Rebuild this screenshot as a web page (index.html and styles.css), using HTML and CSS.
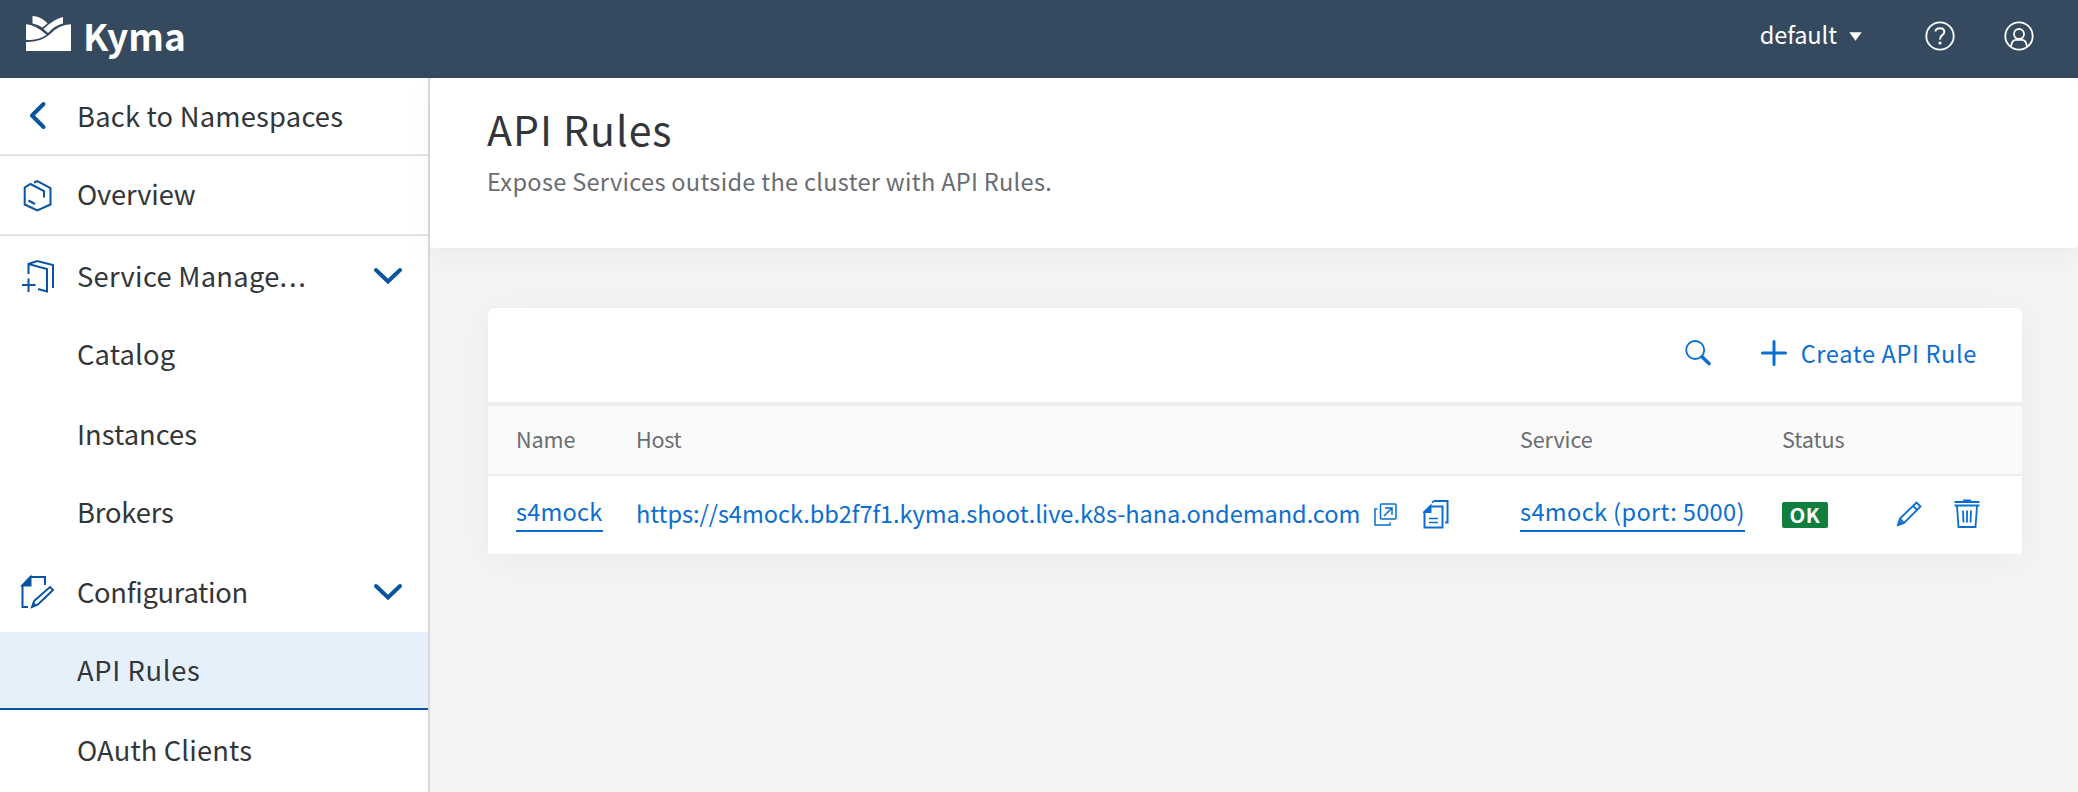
FILE: index.html
```
<!DOCTYPE html>
<html lang="en">
<head>
<meta charset="utf-8">
<title>Kyma</title>
<link rel="stylesheet" href="styles.css">
</head>
<body>
<header class="topbar">
  <div class="brand">
    <svg class="brand-mark" width="46" height="36" viewBox="0 0 46 36" fill="#fff">
      <path d="M6.500 0Q15 .3 21.500 7.300L16.500 11.500Q12 8.500 6.500 7.500Z"/>
      <path d="M37 1V7.500Q29 9 22 17L17.500 13Q28 3 37 1Z"/>
      <path d="M0 8.300Q9 8.500 20.500 18.800Q12 25 0 23.700Z"/>
      <path d="M45 8.300V35H0V26Q14 26.500 23 19Q33 8.500 45 8.300Z"/>
    </svg>
    <span class="brand-name">Kyma</span>
  </div>
  <div class="topbar-actions">
    <span class="namespace">default</span>
    <svg class="caret" width="13" height="9" viewBox="0 0 13 9"><path d="M.3.300h12.400L6.500 8.700z" fill="#fff"/></svg>
    <svg class="help" width="30" height="30" viewBox="0 0 30 30" fill="none" stroke="#fff" stroke-width="1.800"><circle cx="15" cy="15" r="13.700"/><path d="M10.500 10.500Q10.800 7.200 15 7.200Q19.300 7.200 19.300 10.800Q19.300 12.800 17.200 14.200Q15 15.600 15 18.500" stroke-width="2"/><circle cx="15" cy="22" r="1.600" fill="#fff" stroke="none"/></svg>
    <svg class="user" width="30" height="30" viewBox="0 0 30 30" fill="none" stroke="#fff" stroke-width="1.800"><circle cx="15" cy="15" r="13.700"/><circle cx="15" cy="13" r="5"/><path d="M7 25.500Q8 18.800 12 18.800H18Q22 18.800 23 25.500"/></svg>
  </div>
</header>
<div class="body">
  <nav class="sidebar">
    <a class="item item-back"><svg class="item-icon" width="36" height="36" viewBox="0 0 36 36"><path d="M24.500 6L13 17.500L24.500 29" fill="none" stroke="#0854a0" stroke-width="4" stroke-linecap="round" stroke-linejoin="round"/></svg><span class="label t-back">Back to Namespaces</span></a>
    <a class="item item-overview"><svg class="item-icon" width="36" height="36" viewBox="0 0 36 36" fill="none" stroke="#0854a0" stroke-width="2"><path d="M15 5.500L18.300 4L31.500 11V27.500L18.300 33.500L5.700 27.500V10.500L11.500 7L25 14V20.500M9.500 23.500L16 27"/></svg><span class="label t-overview">Overview</span></a>
    <a class="item tall"><svg class="item-icon" width="36" height="36" viewBox="0 0 36 36" fill="none" stroke="#0854a0" stroke-width="2"><path d="M9.500 16V6L28 11V33.500L19 31M9.500 6L18 3L34 7V30M3 27H16.500M9.500 20.500V34"/></svg><span class="label t-service">Service Manage<span class="dots">...</span></span><svg class="chevron" width="30" height="18" viewBox="0 0 30 18"><path d="M3 3L15 14.500L27 3" fill="none" stroke="#0854a0" stroke-width="4" stroke-linecap="round"/></svg></a>
    <a class="item"><span class="label t-catalog">Catalog</span></a>
    <a class="item tall"><span class="label t-instances">Instances</span></a>
    <a class="item"><span class="label t-brokers">Brokers</span></a>
    <a class="item tall"><svg class="item-icon" width="36" height="36" viewBox="0 0 36 36" fill="none" stroke="#0854a0" stroke-width="2"><path d="M26 11V3H11.500L3.500 11.500V33H9"/><path d="M11.500 3V11.500H3.500Z" fill="#0854a0"/><path d="M13 33L15.500 26.500L31 13L34 16L19 30.500Z"/><path d="M12 34L14 28L18 31.500Z" fill="#0854a0" stroke="none"/></svg><span class="label t-config">Configuration</span><svg class="chevron" width="30" height="18" viewBox="0 0 30 18"><path d="M3 3L15 14.500L27 3" fill="none" stroke="#0854a0" stroke-width="4" stroke-linecap="round"/></svg></a>
    <a class="item selected"><span class="label t-api">API Rules</span></a>
    <a class="item tall"><span class="label t-oauth">OAuth Clients</span></a>
  </nav>
  <main class="main">
    <section class="page-head">
      <h1 class="title">API Rules</h1>
      <p class="subtitle">Expose Services outside the cluster with API Rules.</p>
    </section>
    <section class="card">
      <div class="toolbar">
        <svg class="search" width="26" height="26" viewBox="0 0 26 26" fill="none" stroke="#0a6ed1"><circle cx="10.200" cy="10" r="9" stroke-width="1.800"/><path d="M17 16.800L24 23.500" stroke-width="3.600" stroke-linecap="round"/></svg>
        <svg class="plus" width="26" height="26" viewBox="0 0 26 26"><path d="M13 1.500V24.500M1.500 13H24.500" stroke="#0a6ed1" stroke-width="3" stroke-linecap="round"/></svg>
        <span class="create">Create API Rule</span>
      </div>
      <div class="grid head-row"><span>Name</span><span class="h-host">Host</span><span>Service</span><span>Status</span></div>
      <div class="grid data-row">
        <span><a class="link l-name">s4mock</a></span>
        <span class="host-cell"><a class="host">https://s4mock.bb2f7f1.kyma.shoot.live.k8s-hana.ondemand.com</a>
          <svg class="external" width="23" height="23" viewBox="0 0 23 23" fill="none" stroke="#0a6ed1" stroke-width="1.500"><rect x="6.500" y="1" width="15.500" height="15" rx="1"/><path d="M3.500 6H1V22H16V19.500M10 13L17.500 5.500M11 5H18V12"/></svg>
          <svg class="copy" width="26" height="30" viewBox="0 0 26 30" fill="none" stroke="#0a6ed1" stroke-width="2"><path d="M9 3.500L11.500 2H24.500V23.500H22"/><path d="M7.500 7.500H19.500V28.500H1.500V13Z"/><path d="M7.500 7V13H1.500Z" fill="#0a6ed1"/><path d="M6 19.500H15M6 23.500H15" stroke-width="1.600"/></svg></span>
        <span><a class="link l-service">s4mock (port: 5000)</a></span>
        <span><b class="badge">OK</b></span>
        <span class="row-actions">
          <svg class="edit" width="26" height="26" viewBox="0 0 26 26" fill="none" stroke="#0a6ed1" stroke-width="1.800"><path d="M2 24L4 17.500L20.500 1.500L24.500 5.500L8 22ZM17 5L21 9M4 18L8 22"/><path d="M1 25L3 19L7 22.500Z" fill="#0a6ed1" stroke="none"/></svg>
          <svg class="trash" width="26" height="30" viewBox="0 0 26 30" fill="none" stroke="#0a6ed1" stroke-width="1.800"><path d="M.5 3H25.500M.5 6.500H25.500M9 1.500H17M3 7L4.500 28H21.500L23 7M9 11.500L9.500 23.500M13 11.500V23.500M17 11.500L16.500 23.500"/></svg>
        </span>
      </div>
    </section>
  </main>
</div>
</body>
</html>
```
FILE: styles.css
```
* { box-sizing: border-box; }
body { margin: 0; height: 792px; overflow: hidden; font-family: "Noto Sans CJK SC", "Noto Sans", sans-serif; color: #32363a; background: #f3f4f5; display: flex; flex-direction: column; }
svg { display: block; flex: none; }
span, a { white-space: nowrap; }

.topbar { height: 78px; flex: none; background: #354a5f; color: #fff; display: flex; justify-content: space-between; }
.brand { display: flex; padding: 16px 0 0 26px; }
.brand-name { margin: -4px 0 0 11px; font-weight: 700; font-size: 37px; line-height: 46px; }
.topbar-actions { display: flex; align-items: center; padding: 0 44px 7px 0; }
.namespace { font-size: 23.600px; line-height: 36px; letter-spacing: -.1px; padding-bottom: 3px; }
.caret { margin: 2px 63px 0 12px; }
.help { margin-right: 49px; }

.body { flex: 1; min-height: 0; display: flex; }
.sidebar { width: 430px; flex: none; background: #fff; border-right: 2px solid #d9d9d9; font-size: 27.300px; line-height: 40px; }
.item { display: flex; align-items: center; height: 78px; padding: 0 0 2px 77px; }
.item.tall { height: 80px; padding-bottom: 0; }
.item-back, .item-overview { border-bottom: 2px solid #e4e4e4; padding-bottom: 0; }
.item-overview { height: 80px; }
.item-icon { margin: 0 22px 0 -58px; }
.label { padding-bottom: 3px; }
.item-overview .label { padding-bottom: 4px; }
.t-back { letter-spacing: .22px; }
.t-overview { letter-spacing: -.15px; }
.t-service { letter-spacing: .28px; }
.dots { letter-spacing: 1.700px; }
.t-catalog { letter-spacing: .18px; }
.t-instances { letter-spacing: .05px; }
.t-brokers { letter-spacing: -.15px; }
.t-config { letter-spacing: -.3px; }
.t-api { letter-spacing: .65px; }
.t-oauth { letter-spacing: .15px; }
.chevron { margin: 0 25px 0 auto; }
.selected { background: #e5f0fa; border-bottom: 2px solid #0854a0; padding-bottom: 0; }

.main { flex: 1; min-width: 0; }
.page-head { height: 170px; background: #fff; border-radius: 4px; padding: 22px 58px 0 57px; box-shadow: 0 10px 30px rgba(0, 0, 0, .04), 0 0 2px rgba(0, 0, 0, .03); }
.title { margin: 0; font-weight: 400; font-size: 41px; line-height: 56px; letter-spacing: 1px; }
.subtitle { margin: 7px 0 0; font-size: 23.600px; line-height: 36px; letter-spacing: .28px; color: #6a6d70; }

.card { margin: 60px 56px 0 58px; background: #fff; border-radius: 6px 6px 0 0; box-shadow: 0 5px 40px rgba(0, 0, 0, .045), 0 0 2px rgba(0, 0, 0, .03); }
.toolbar { height: 94px; display: flex; align-items: center; justify-content: flex-end; padding: 0 45px 4px 0; color: #0a6ed1; font-size: 23.600px; }
.search { margin-right: 50px; }
.plus { margin-right: 14px; }
.create { letter-spacing: .62px; padding-bottom: 1px; }
.grid { display: grid; grid-template-columns: 120px 884px 262px 114px 1fr; align-items: center; padding-left: 28px; }
.head-row { height: 74px; background: #fafafa; border-top: 4px solid #ededed; border-bottom: 2px solid #ededed; color: #6a6d70; font-size: 21.600px; letter-spacing: -.12px; padding-bottom: 3px; }
.h-host { letter-spacing: -.3px; }
.data-row { height: 78px; color: #0a6ed1; font-size: 23.600px; padding-bottom: 2px; }
.link { display: inline-block; height: 38px; line-height: 34px; border-bottom: 2px solid #0a6ed1; margin-bottom: 2px; }
.l-name { letter-spacing: .2px; }
.l-service { letter-spacing: .35px; }
.host-cell { display: flex; align-items: center; }
.host { letter-spacing: -.055px; padding-bottom: 3px; }
.external { margin-left: 14px; }
.copy { margin-left: 26px; }
.badge { display: block; width: 46px; height: 26px; margin-top: 2px; border-radius: 2px; background: #107e3e; color: #fff; font-size: 20.500px; line-height: 25px; letter-spacing: .6px; text-align: center; }
.row-actions { display: flex; align-items: center; }
.trash { margin-left: 32px; }
```
